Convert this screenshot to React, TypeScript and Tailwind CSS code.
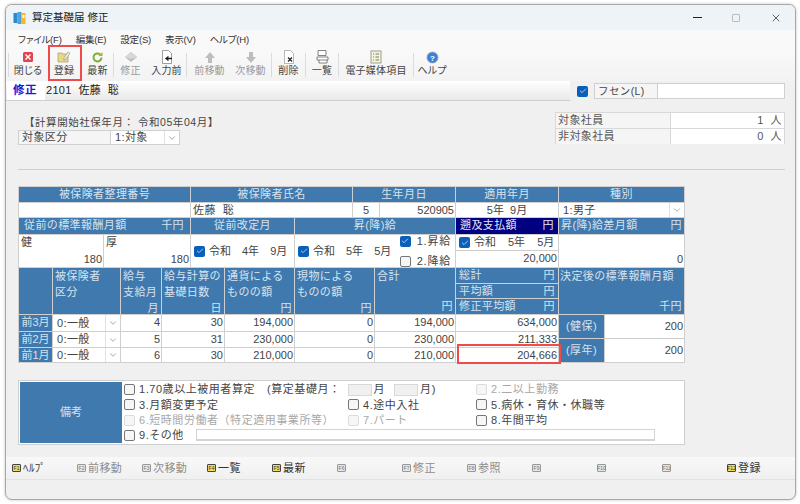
import type { ReactNode } from 'react';
import { ChevronDown, Check, X } from 'lucide-react';

const hd = 'bg-[#4079ad] text-[#d6e3ef] text-[11px] leading-[15px] tracking-[0.4px] overflow-hidden whitespace-nowrap';
const cell = 'bg-white text-[#444] text-[11px] leading-[15px] overflow-hidden whitespace-nowrap';

function Box({ on, off }: { on?: boolean; off?: boolean }) {
  if (on) {
    return (
      <span className="inline-flex items-center justify-center w-[11px] h-[11px] rounded-[2px] bg-[#0a5fb8] shrink-0">
        <Check className="size-[8px] text-[#cfe0f5]" strokeWidth={2.5} />
      </span>
    );
  }
  return <span className={'inline-block w-[11px] h-[11px] rounded-[2px] border bg-[#f6f6f6] shrink-0 ' + (off ? 'border-[#dcdcdc]' : 'border-[#777]')} />;
}

function Select({ value }: { value: string }) {
  return (
    <div className="flex items-center justify-between h-full pl-1 tracking-[0.4px]">
      <span>{value}</span>
      <span className="flex items-center justify-center w-[15px] h-full border-l border-[#e2e2e2] shrink-0">
        <ChevronDown className="size-[10px] text-[#777]" strokeWidth={1.5} />
      </span>
    </div>
  );
}

function ToolBtn({ w, label, off, icon }: { w: string; label: string; off?: boolean; icon: ReactNode }) {
  return (
    <div className={w + ' flex flex-col items-center shrink-0'}>
      <div className="h-[14px] flex items-center justify-center">{icon}</div>
      <span className={"text-[10px] leading-[14px] tracking-[0.2px] whitespace-nowrap [font-feature-settings:'palt'] " + (off ? 'text-[#9a9a9a]' : 'text-[#444]')}>{label}</span>
    </div>
  );
}

const Sep = () => <div className="w-px h-[24px] mt-[3px] bg-[#dcdcdc] shrink-0" />;

function FKey({ n, label, off }: { n: string; label?: string; off?: boolean }) {
  return (
    <div className="w-[65px] flex items-center gap-[2px] shrink-0">
      <span className={'flex items-center justify-center w-[9px] h-[8px] rounded-[1px] border text-[5px] leading-none ' + (off ? 'bg-[#e6e6e6] border-[#999] text-[#777]' : 'bg-[#f3d95a] border-[#444] text-[#333]')}>
        {n}
      </span>
      {label && <span className={"text-[11px] tracking-[0.4px] whitespace-nowrap [font-feature-settings:'palt'] " + (off ? 'text-[#8c8c8c]' : 'text-[#333]')}>{label}</span>}
    </div>
  );
}

function Opt({ label, off }: { label: string; off?: boolean }) {
  return (
    <div className="flex items-center gap-[4px] whitespace-nowrap">
      <Box off={off} />
      <span className={off ? 'text-[#a8a8a8]' : 'text-[#444]'}>{label}</span>
    </div>
  );
}

const months = [
  { m: '前3月', pay: '4', days: '30', cash: '194,000', total: '634,000' },
  { m: '前2月', pay: '5', days: '31', cash: '230,000', total: '211,333' },
  { m: '前1月', pay: '6', days: '30', cash: '210,000', total: '204,666' },
];

export default function App() {
  return (
    <div className="w-[800px] h-[504px] bg-white pt-[4px] pl-[5px] font-['Liberation_Sans','Noto_Sans_CJK_JP',sans-serif] overflow-hidden">
      <div className="w-[791px] h-[496px] rounded-[7px] border border-[#a8a8a8] bg-[#f0f0f0] shadow-[0_0_3px_rgba(0,0,0,0.25)] overflow-hidden flex flex-col">
        {/* title bar */}
        <div className="h-[25px] bg-[#eef3f7] flex items-center pl-[7px] shrink-0">
          <svg width="13" height="14" viewBox="0 0 13 14" className="mr-[6px]">
            <rect x="0.5" y="2" width="4" height="10" fill="#2f86c8" />
            <rect x="4.5" y="1" width="4" height="12" fill="#4aa3dc" />
            <rect x="8.5" y="2" width="4" height="11" fill="#f2b632" />
            <rect x="9.5" y="4" width="2" height="3" fill="#fff" />
          </svg>
          <span className="text-[10.5px] text-[#222]">算定基礎届 修正</span>
          <div className="ml-auto flex items-center">
            <span className="w-[36px] flex justify-center"><span className="w-[9px] h-px bg-[#222]" /></span>
            <span className="w-[42px] flex justify-center"><span className="w-[8px] h-[8px] rounded-[1px] border border-[#bcbcbc]" /></span>
            <span className="w-[38px] flex justify-center"><X className="size-[12px] text-[#222]" strokeWidth={1.4} /></span>
          </div>
        </div>
        {/* menu */}
        <div className="h-[20px] bg-[#f9f9f9] flex items-center gap-[14px] pl-[12px] text-[9.5px] tracking-[-0.2px] text-[#333] shrink-0 [font-feature-settings:'palt']">
          <span>ファイル(F)</span>
          <span>編集(E)</span>
          <span>設定(S)</span>
          <span>表示(V)</span>
          <span>ヘルプ(H)</span>
        </div>
        {/* toolbar */}
        <div className="h-[31px] bg-gradient-to-b from-[#f9f9f9] to-[#f3f3f3] flex items-start pl-[2px] shrink-0 relative">
          <Sep />
          <ToolBtn w="w-[37px] pl-px" label="閉じる" icon={
            <svg width="12" height="12" viewBox="0 0 12 12"><rect x="1" y="1" width="10" height="10" rx="1.5" fill="#e2454f" /><path d="M3.5 3.5l5 5M8.5 3.5l-5 5" stroke="#fff" strokeWidth="1.4" /></svg>
          } />
          <ToolBtn w="w-[36px]" label="登録" icon={
            <svg width="14" height="14" viewBox="0 0 14 14"><path d="M1 3h4l1 1h5v8H1z" fill="#e8d98a" stroke="#a89a55" strokeWidth="0.7" /><path d="M7 8l4-6 2 1.2-4 6-2.2.8z" fill="#f5f0d8" stroke="#888" strokeWidth="0.6" /></svg>
          } />
          <ToolBtn w="w-[31px]" label="最新" icon={
            <svg width="13" height="13" viewBox="0 0 13 13"><path d="M10.5 6.5a4 4 0 1 1-1.3-3" fill="none" stroke="#7fae3e" strokeWidth="2" /><path d="M11.5 1v4h-4z" fill="#c2a23a" /></svg>
          } />
          <Sep />
          <ToolBtn w="w-[33px]" label="修正" off icon={
            <svg width="14" height="12" viewBox="0 0 14 12"><path d="M7 1l6 5-6 5-6-5z" fill="#bdbdbd" /><path d="M7 1l6 5-6 2-6-2z" fill="#d8d8d8" /></svg>
          } />
          <ToolBtn w="w-[39px]" label="入力前" icon={
            <svg width="12" height="14" viewBox="0 0 12 14"><path d="M1.5.5h6l3 3v10h-9z" fill="#fff" stroke="#777" strokeWidth="0.7" /><path d="M11 8.500H6M7.500 6.500l-2.500 2 2.500 2" fill="none" stroke="#222" strokeWidth="1.4" /></svg>
          } />
          <Sep />
          <ToolBtn w="w-[43px] pl-[2px]" label="前移動" off icon={
            <svg width="12" height="13" viewBox="0 0 12 13"><path d="M6 1l5 6H8v5H4V7H1z" fill="#bdbdbd" /></svg>
          } />
          <ToolBtn w="w-[41px]" label="次移動" off icon={
            <svg width="12" height="13" viewBox="0 0 12 13"><path d="M6 12L1 6h3V1h4v5h3z" fill="#bdbdbd" /></svg>
          } />
          <Sep />
          <ToolBtn w="w-[33px]" label="削除" icon={
            <svg width="12" height="14" viewBox="0 0 12 14"><path d="M1.500.5h6l3 3v10h-9z" fill="#fff" stroke="#999" strokeWidth="0.7" /><path d="M5 7.500l4 4M9 7.500l-4 4" stroke="#222" strokeWidth="1.200" /></svg>
          } />
          <Sep />
          <ToolBtn w="w-[32px]" label="一覧" icon={
            <svg width="13" height="14" viewBox="0 0 13 14"><path d="M2 .5h8v5H2zM1 7h11v3H1zM3 10v3h8v-3" fill="#fff" stroke="#666" strokeWidth="0.8" /></svg>
          } />
          <Sep />
          <ToolBtn w="w-[74px]" label="電子媒体項目" icon={
            <svg width="12" height="14" viewBox="0 0 12 14"><rect x="1" y="1" width="10" height="12" fill="#f5f3e6" stroke="#8a8a6a" strokeWidth="0.8" /><path d="M3 4h1M3 7h1M3 10h1M5.500 4H9M5.500 7H9M5.500 10H9" stroke="#5c7a3a" strokeWidth="0.9" /></svg>
          } />
          <Sep />
          <ToolBtn w="w-[36px]" label="ヘルプ" icon={
            <svg width="13" height="13" viewBox="0 0 13 13"><circle cx="6.500" cy="6.500" r="5.500" fill="#3d7fd6" stroke="#8fa8c8" strokeWidth="0.8" /><text x="6.500" y="9.500" textAnchor="middle" fontSize="8" fontWeight="700" fill="#fff">?</text></svg>
          } />
          <div className="absolute left-[42px] top-[-5px] w-[34px] h-[36px] border-[2px] border-[#f04a4a]" />
        </div>
        {/* tab row */}
        <div className="h-[20px] flex items-stretch shrink-0">
          <div className="flex-1 flex items-stretch bg-gradient-to-b from-white to-[#e9e9e9] border-b border-[#cfcfcf]">
            <span className="w-[38px] bg-white pl-[6px] text-[11.5px] leading-[19px] font-bold text-[#1a1ad8] tracking-[0.4px] ml-px">修正</span>
            <span className="ml-px text-[11px] leading-[19px] text-[#222] tracking-[0.3px]">2101&nbsp;&nbsp;佐藤&nbsp;&nbsp;聡</span>
          </div>
          <div className="w-[225px] flex items-center pl-[7px] gap-[6px]">
            <Box on />
            <div className="flex h-[16px] border border-[#d0d0d0] bg-white text-[10.5px] text-[#444] tracking-[0.4px]">
              <span className="w-[63px] pl-[3px] leading-[14px] bg-[#f5f5f5] border-r border-[#d0d0d0]">フセン(L)</span>
              <span className="w-[126px]" />
            </div>
          </div>
        </div>
        {/* content */}
        <div className="flex-1 flex flex-col pl-[12px]">
          <div className="flex justify-between pr-[10px] pt-[11px] h-[68px] shrink-0">
            <div className="pt-[2px]">
              <div className="text-[10.5px] leading-[14px] text-[#444] pl-[6px] mt-[1px] tracking-[0.55px] whitespace-nowrap">【計算開始社保年月：&nbsp;令和05年04月】</div>
              <div className="flex h-[15px] mt-[1px] w-[162px] border border-[#d0d0d0] text-[11px] text-[#444] tracking-[0.4px] bg-[#f5f5f5]">
                <span className="w-[92px] pl-[3px] leading-[13px] border-r border-[#d0d0d0]">対象区分</span>
                <span className="flex-1 bg-white leading-[13px]"><Select value="1:対象" /></span>
              </div>
            </div>
            <div className="w-[230px] h-[32px] border border-[#d8d8d8] text-[11px] leading-[15px] text-[#555] tracking-[0.4px] flex flex-col bg-[#d8d8d8] gap-px">
              <div className="flex flex-1"><span className="w-[115px] pl-[2px] bg-[#f5f5f5] border-r border-[#d8d8d8]">対象社員</span><span className="flex-1 bg-white text-right pr-[2px]">1&nbsp;&nbsp;人</span></div>
              <div className="flex flex-1"><span className="w-[115px] pl-[2px] bg-[#f5f5f5] border-r border-[#d8d8d8]">非対象社員</span><span className="flex-1 bg-white text-right pr-[2px]">0&nbsp;&nbsp;人</span></div>
            </div>
          </div>
          <div className="w-[767px] h-px bg-[#cfcfcf] shrink-0" />
          {/* main grid */}
          <div className="relative mt-[16px] w-[667px] shrink-0">
            <div className="grid gap-px p-px bg-[#cfcfcf] grid-cols-[33px_50px_16px_40px_28px_33px_69px_4px_52px_21px_4px_75px_102px_45px_79px] grid-rows-[15px_14px_16px_15px_16px_15px_14px_15px_16px_15px_14px]">
              <div className={hd + ' col-[1/6] row-[1/2] text-center'}>被保険者整理番号</div>
              <div className={hd + ' col-[6/10] row-[1/2] text-center'}>被保険者氏名</div>
              <div className={hd + ' col-[10/13] row-[1/2] text-center'}>生年月日</div>
              <div className={hd + ' col-[13/14] row-[1/2] text-center'}>適用年月</div>
              <div className={hd + ' col-[14/16] row-[1/2] text-center'}>種別</div>

              <div className={cell + ' col-[1/6] row-[2/3]'} />
              <div className={cell + ' col-[6/10] row-[2/3] pl-[2px] tracking-[0.4px]'}>佐藤&nbsp;&nbsp;聡</div>
              <div className={cell + ' col-[10/12] row-[2/3] text-center'}>5</div>
              <div className={cell + ' col-[12/13] row-[2/3] text-right pr-px'}>520905</div>
              <div className={cell + ' col-[13/14] row-[2/3] text-center'}>5年&nbsp;&nbsp;9月</div>
              <div className={cell + ' col-[14/16] row-[2/3] tracking-[0.4px]'}><Select value="1:男子" /></div>

              <div className={hd + ' col-[1/6] row-[3/4] flex justify-between pl-[5px] pr-[6px]'}><span>従前の標準報酬月額</span><span>千円</span></div>
              <div className={hd + ' col-[6/8] row-[3/4] text-center'}>従前改定月</div>
              <div className={hd + ' col-[8/13] row-[3/4] text-center'}>昇(降)給</div>
              <div className="bg-[#000080] text-[#e6e6f5] text-[11px] leading-[15px] tracking-[0.4px] col-[13/14] row-[3/4] flex justify-between px-[4px]"><span>遡及支払額</span><span>円</span></div>
              <div className={hd + ' col-[14/16] row-[3/4] flex justify-between px-[2px]'}><span>昇(降)給差月額</span><span>円</span></div>

              <div className={cell + ' col-[1/3] row-[4/6] flex flex-col justify-between pl-[2px] pr-[1px]'}><span>健</span><span className="text-right">180</span></div>
              <div className={cell + ' col-[3/6] row-[4/6] flex flex-col justify-between pl-[2px] pr-px'}><span>厚</span><span className="text-right">180</span></div>
              <div className={cell + ' col-[6/8] row-[4/6] flex items-center gap-[4px] pl-[3px]'}><Box on /><span className="flex gap-[11px]"><span>令和</span><span>4年</span><span>9月</span></span></div>
              <div className={cell + ' col-[8/13] row-[4/6] flex items-center pl-[3px]'}>
                <Box on /><span className="ml-[4px] flex gap-[11px]"><span>令和</span><span>5年</span><span>5月</span></span>
                <div className="ml-auto mr-[4px] flex flex-col gap-[5px] tracking-[0.8px]">
                  <div className="flex items-center gap-[6px]"><Box on />1.昇給</div>
                  <div className="flex items-center gap-[6px]"><Box />2.降給</div>
                </div>
              </div>
              <div className={cell + ' col-[13/14] row-[4/5] flex items-center gap-[4px] pl-[3px]'}><Box on /><span className="flex gap-[12px]"><span>令和</span><span>5年</span><span>5月</span></span></div>
              <div className={cell + ' col-[13/14] row-[5/6] text-right pr-px'}>20,000</div>
              <div className={cell + ' col-[14/16] row-[4/6] flex items-end justify-end pr-px'}>0</div>

              <div className={hd + ' col-[1/2] row-[6/9]'} />
              <div className={hd + ' col-[2/4] row-[6/9] pl-[2px] leading-[16px]'}>被保険者<br />区分</div>
              <div className={hd + ' col-[4/5] row-[6/9] pl-[2px] leading-[16px] flex flex-col'}><span>給与<br />支給月</span><span className="self-end mt-auto pr-[2px]">月</span></div>
              <div className={hd + ' col-[5/7] row-[6/9] pl-[2px] leading-[16px] flex flex-col'}><span>給与計算の<br />基礎日数</span><span className="self-end mt-auto pr-[2px]">日</span></div>
              <div className={hd + ' col-[7/8] row-[6/9] pl-[2px] leading-[16px] flex flex-col'}><span>通貨による<br />ものの額</span><span className="self-end mt-auto pr-[2px]">円</span></div>
              <div className={hd + ' col-[8/11] row-[6/9] pl-[2px] leading-[16px] flex flex-col'}><span>現物による<br />ものの額</span><span className="self-end mt-auto pr-[2px]">円</span></div>
              <div className={hd + ' col-[11/13] row-[6/9] pl-[2px] leading-[16px] flex flex-col'}><span>合計</span><span className="self-end mt-auto pr-[2px]">円</span></div>
              <div className={hd + ' col-[13/14] row-[6/7] flex justify-between px-[3px]'}><span>総計</span><span>円</span></div>
              <div className={hd + ' col-[13/14] row-[7/8] flex justify-between px-[3px]'}><span>平均額</span><span>円</span></div>
              <div className={hd + ' col-[13/14] row-[8/9] flex justify-between px-[3px]'}><span>修正平均額</span><span>円</span></div>
              <div className={hd + ' col-[14/16] row-[6/9] flex flex-col pl-[1px] leading-[16px]'}><span>決定後の標準報酬月額</span><span className="self-end mt-auto pr-[2px]">千円</span></div>

              {months.flatMap((r, i) => {
                const rows = ['row-[9/10]', 'row-[10/11]', 'row-[11/12]'][i];
                return [
                  <div key={r.m + 'm'} className={hd + ' col-[1/2] text-center tracking-normal ' + rows}>{r.m}</div>,
                  <div key={r.m + 'k'} className={cell + ' col-[2/4] ' + rows}><Select value="0:一般" /></div>,
                  <div key={r.m + 'p'} className={cell + ' col-[4/5] text-right pr-px ' + rows}>{r.pay}</div>,
                  <div key={r.m + 'd'} className={cell + ' col-[5/7] text-right pr-px ' + rows}>{r.days}</div>,
                  <div key={r.m + 'c'} className={cell + ' col-[7/8] text-right pr-px ' + rows}>{r.cash}</div>,
                  <div key={r.m + 'g'} className={cell + ' col-[8/11] text-right pr-px ' + rows}>0</div>,
                  <div key={r.m + 's'} className={cell + ' col-[11/13] text-right pr-px ' + rows}>{r.cash}</div>,
                  <div key={r.m + 't'} className={cell + ' col-[13/14] text-right pr-px ' + rows}>{r.total}</div>,
                ];
              })}
              <div className="col-[14/16] row-[9/12] flex flex-col gap-px">
                <div className="flex-1 flex gap-px">
                  <span className={hd + ' w-[45px] leading-[22px] text-center'}>(健保)</span>
                  <span className={cell + ' flex-1 text-right pr-px leading-[22px]'}>200</span>
                </div>
                <div className="flex-1 flex gap-px">
                  <span className={hd + ' w-[45px] leading-[22px] text-center'}>(厚年)</span>
                  <span className={cell + ' flex-1 text-right pr-px leading-[22px]'}>200</span>
                </div>
              </div>
            </div>
            <div className="absolute left-[439px] top-[158px] w-[104px] h-[20px] border-[2px] border-[#f04a4a]" />
          </div>
          {/* remarks */}
          <div className="mt-[17px] w-[667px] h-[65px] border border-[#cfcfcf] p-px bg-white flex shrink-0">
            <div className="w-[102px] bg-[#4079ad] text-[#d6e3ef] text-[11px] flex items-center justify-center">備考</div>
            <div className="flex-1 pl-[2px] text-[11px] tracking-[0.55px] grid grid-cols-[224px_128px_1fr] grid-rows-4 items-center">
              <div className="col-span-2 flex items-center whitespace-nowrap text-[#444]">
                <Opt label="1.70歳以上被用者算定" />
                <span className="ml-[12px]">(算定基礎月：</span>
                <span className="w-[24px] h-[12px] ml-[7px] bg-[#f0f0f0] border border-[#d8d8d8]" />
                <span className="ml-[2px]">月</span>
                <span className="w-[24px] h-[12px] ml-[9px] bg-[#f0f0f0] border border-[#d8d8d8]" />
                <span className="ml-[2px]">月)</span>
              </div>
              <Opt label="2.二以上勤務" off />
              <Opt label="3.月額変更予定" />
              <Opt label="4.途中入社" />
              <Opt label="5.病休・育休・休職等" />
              <Opt label="6.短時間労働者（特定適用事業所等）" off />
              <Opt label="7.パート" off />
              <Opt label="8.年間平均" />
              <div className="col-span-3 flex items-center">
                <Opt label="9.その他" />
                <span className="ml-[12px] w-[459px] h-[12px] bg-white border border-[#d4d4d4] border-b-[2px]" />
              </div>
            </div>
          </div>
          {/* function keys */}
          <div className="mt-[12px] -ml-[12px] h-[23px] flex items-center pl-[6px] bg-gradient-to-b from-[#f8f8f8] to-[#f0f0f0] border-b border-[#e2e2e2] shrink-0">
            <FKey n="F1" label="ﾍﾙﾌﾟ" />
            <FKey n="F2" label="前移動" off />
            <FKey n="F3" label="次移動" off />
            <FKey n="F4" label="一覧" />
            <FKey n="F5" label="最新" />
            <FKey n="F6" off />
            <FKey n="F7" label="修正" off />
            <FKey n="F8" label="参照" off />
            <FKey n="F9" off />
            <FKey n="F10" off />
            <FKey n="F11" off />
            <FKey n="F12" label="登録" />
          </div>
        </div>
      </div>
    </div>
  );
}
